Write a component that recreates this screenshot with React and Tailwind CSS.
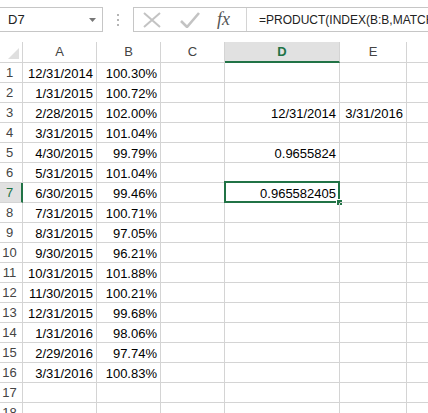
import React from "react";

const rows = [
  ["12/31/2014", "100.30%"],
  ["1/31/2015", "100.72%"],
  ["2/28/2015", "102.00%", "12/31/2014", "3/31/2016"],
  ["3/31/2015", "101.04%"],
  ["4/30/2015", "99.79%", "0.9655824"],
  ["5/31/2015", "101.04%"],
  ["6/30/2015", "99.46%", "0.965582405"],
  ["7/31/2015", "100.71%"],
  ["8/31/2015", "97.05%"],
  ["9/30/2015", "96.21%"],
  ["10/31/2015", "101.88%"],
  ["11/30/2015", "100.21%"],
  ["12/31/2015", "99.68%"],
  ["1/31/2016", "98.06%"],
  ["2/29/2016", "97.74%"],
  ["3/31/2016", "100.83%"],
  [],
  [],
];

const cols = [
  { name: "A", w: "w-[74px]" },
  { name: "B", w: "w-[64px]" },
  { name: "C", w: "w-[64px]" },
  { name: "D", w: "w-[115px]" },
  { name: "E", w: "w-[67px]" },
];

function Toolbar() {
  return (
    <div className="h-[42px] flex items-start pt-[7px] bg-white">
      {/* Name box */}
      <div className="w-[103px] shrink-0 h-[25px] border border-[#c6c6c6] border-l-0 flex items-center justify-between pl-[8px] pr-[6px] text-[13px] text-[#222]">
        <span>D7</span>
        <svg width="7" height="4" viewBox="0 0 7 4">
          <path d="M0 0 L7 0 L3.5 4 Z" fill="#777" />
        </svg>
      </div>
      {/* dotted grip */}
      <div className="w-[30px] shrink-0 h-[25px] flex flex-col items-center justify-center gap-[3px]">
        <span className="w-[2px] h-[2px] bg-[#b5b5b5]" />
        <span className="w-[2px] h-[2px] bg-[#b5b5b5]" />
        <span className="w-[2px] h-[2px] bg-[#b5b5b5]" />
      </div>
      {/* Formula box */}
      <div className="flex-1 min-w-0 h-[25px] border border-[#c6c6c6] border-r-0 flex items-center">
        <div className="w-[113px] shrink-0 h-full flex items-center border-r border-[#d4d4d4]">
          <svg className="ml-[9px]" width="18" height="16" viewBox="0 0 18 16">
            <path d="M1 1 L17 15 M17 1 L1 15" stroke="#c3c3c3" strokeWidth="2" fill="none" />
          </svg>
          <svg className="ml-[19px]" width="20" height="16" viewBox="0 0 20 16">
            <path d="M1 9 L7 15 L19 1" stroke="#c3c3c3" strokeWidth="2.6" fill="none" />
          </svg>
          <span className="ml-[17px] text-[18px] italic text-[#555] leading-none font-['Liberation_Serif',serif] -mt-[2px]">
            fx
          </span>
        </div>
        <div className="min-w-0 pl-[12px] text-[12px] text-[#222] whitespace-nowrap overflow-hidden">
          =PRODUCT(INDEX(B:B,MATCH(D3,A:A,0)):INDEX(B:B,MATCH(E3,A:A,0)))
        </div>
      </div>
    </div>
  );
}

function HeaderRow() {
  return (
    <div className="flex h-[21px] bg-white">
      <div className="w-[23px] shrink-0 border-r border-b border-[#d4d4d4] relative">
        <svg className="absolute right-[3px] bottom-[3px]" width="11" height="11" viewBox="0 0 11 11">
          <path d="M11 0 L11 11 L0 11 Z" fill="#dfdfdf" />
        </svg>
      </div>
      {cols.map((c) =>
        c.name === "D" ? (
          <div
            key={c.name}
            className={`${c.w} shrink-0 bg-[#e1e1e1] border-r border-[#d4d4d4] border-b-2 border-b-[#217346] flex items-center justify-center text-[13px] font-bold text-[#217346]`}
          >
            {c.name}
          </div>
        ) : (
          <div
            key={c.name}
            className={`${c.w} shrink-0 border-r border-b border-[#d4d4d4] flex items-center justify-center text-[13px] text-[#444]`}
          >
            {c.name}
          </div>
        )
      )}
      <div className="flex-1 border-b border-[#d4d4d4]" />
    </div>
  );
}

function Row({ n, data }) {
  const selected = n === 7;
  return (
    <div className="flex h-[20px] bg-white">
      <div
        className={
          selected
            ? "w-[23px] shrink-0 bg-[#e1e1e1] border-r-2 border-r-[#217346] border-b border-b-[#d4d4d4] flex items-center justify-center pr-[2px] text-[13px] text-[#217346]"
            : "w-[23px] shrink-0 border-r border-b border-[#d4d4d4] flex items-center justify-center pr-[3px] text-[13px] text-[#444]"
        }
      >
        {n}
      </div>
      {cols.map((c, i) => (
        <div
          key={c.name}
          className={`${c.w} shrink-0 border-r border-b border-[#d4d4d4] flex items-center justify-end pr-[3px] pt-[2px] text-[13px] text-black whitespace-nowrap relative`}
        >
          {data[i] || ""}
          {selected && c.name === "D" && (
            <>
              <div className="absolute -left-px -top-[2px] -right-px -bottom-px border-2 border-[#217346] pointer-events-none" />
              <div className="absolute -right-[4px] -bottom-[4px] w-[7px] h-[7px] bg-[#217346] border border-white" />
            </>
          )}
        </div>
      ))}
      <div className="flex-1 border-b border-[#d4d4d4]" />
    </div>
  );
}

export default function App() {
  return (
    <div className="w-[428px] h-[413px] overflow-hidden bg-white font-['Liberation_Sans',Arial,sans-serif]">
      <Toolbar />
      <HeaderRow />
      {rows.map((r, i) => (
        <Row key={i} n={i + 1} data={[r[0], r[1], undefined, r[2], r[3]]} />
      ))}
    </div>
  );
}
